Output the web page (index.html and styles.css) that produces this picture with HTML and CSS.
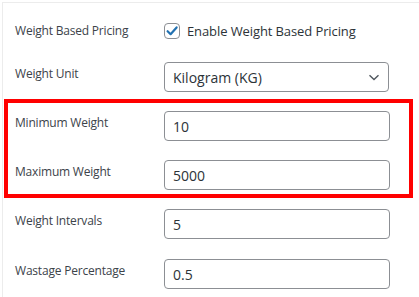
FILE: index.html
```html
<!DOCTYPE html>
<html lang="en">
<head>
<meta charset="utf-8">
<title>Weight Based Pricing</title>
<link rel="stylesheet" href="styles.css">
</head>
<body>
<div class="panel">
  <div class="row row-first">
    <div class="label">Weight Based Pricing</div>
    <label class="check">
      <span class="box">
        <svg viewBox="0 0 16 16" width="16" height="16"><path d="M3.6 8.2 L6.6 11.2 L12.6 4.4" fill="none" stroke="#2271b1" stroke-width="2.2" stroke-linecap="round" stroke-linejoin="round"/></svg>
      </span>
      <span class="check-text">Enable Weight Based Pricing</span>
    </label>
  </div>
  <div class="row">
    <div class="label">Weight Unit</div>
    <div class="field select">
      <span class="value">Kilogram (KG)</span>
      <svg class="chev" viewBox="0 0 12 7" width="12" height="7"><path d="M1.5 1.2 L6 5.5 L10.5 1.2" fill="none" stroke="#50575e" stroke-width="1.4"/></svg>
    </div>
  </div>
  <div class="group">
    <div class="row">
      <div class="label">Minimum Weight</div>
      <div class="field"><span class="value">10</span></div>
    </div>
    <div class="row">
      <div class="label">Maximum Weight</div>
      <div class="field"><span class="value">5000</span></div>
    </div>
    <div class="highlight"></div>
  </div>
  <div class="row">
    <div class="label">Weight Intervals</div>
    <div class="field"><span class="value">5</span></div>
  </div>
  <div class="row row-last">
    <div class="label">Wastage Percentage</div>
    <div class="field"><span class="value">0.5</span></div>
  </div>
</div>
</body>
</html>
```
FILE: styles.css
```css
html, body {
  margin: 0;
  padding: 0;
  background: #ffffff;
}
body {
  font-family: "Open Sans", "Noto Sans", sans-serif;
  width: 419px;
  height: 297px;
  overflow: hidden;
}
.panel {
  margin: 2px 0 0 2px;
  border-top: 1px solid #ececec;
  border-left: 1px solid #ececec;
  padding-left: 12px;
  height: 300px;
}
.row {
  display: flex;
  align-items: flex-start;
  height: 49px;
  padding-top: 8px;
  box-sizing: border-box;
}
.row-first {
  height: 51px;
  padding-top: 20px;
}
.row-last {
  padding-top: 9px;
}
.label {
  width: 149px;
  flex: none;
  font-size: 12px;
  line-height: 17px;
  color: #3c434a;
  padding-top: 3px;
  letter-spacing: -0.2px;
}
.row-first .label {
  padding-top: 0;
  margin-top: -1px;
}
.check {
  display: flex;
  align-items: center;
  gap: 7px;
  height: 16px;
}
.box {
  width: 16px;
  height: 16px;
  box-sizing: border-box;
  border: 1px solid #8c8f94;
  border-radius: 4px;
  position: relative;
  flex: none;
}
.box svg {
  position: absolute;
  left: -1px;
  top: -1px;
}
.check-text {
  font-size: 13px;
  color: #2c3338;
  letter-spacing: -0.1px;
}
.field {
  width: 226px;
  height: 30px;
  box-sizing: border-box;
  border: 1px solid #8c8f94;
  border-radius: 4px;
  display: flex;
  align-items: center;
  padding: 0 8px;
  font-size: 14px;
  color: #2c3338;
}
.select {
  width: 225px;
  justify-content: space-between;
}
.group {
  position: relative;
}
.highlight {
  position: absolute;
  left: -11px;
  right: 6px;
  top: -4px;
  bottom: 3px;
  border: 4px solid #ff0000;
}
```
